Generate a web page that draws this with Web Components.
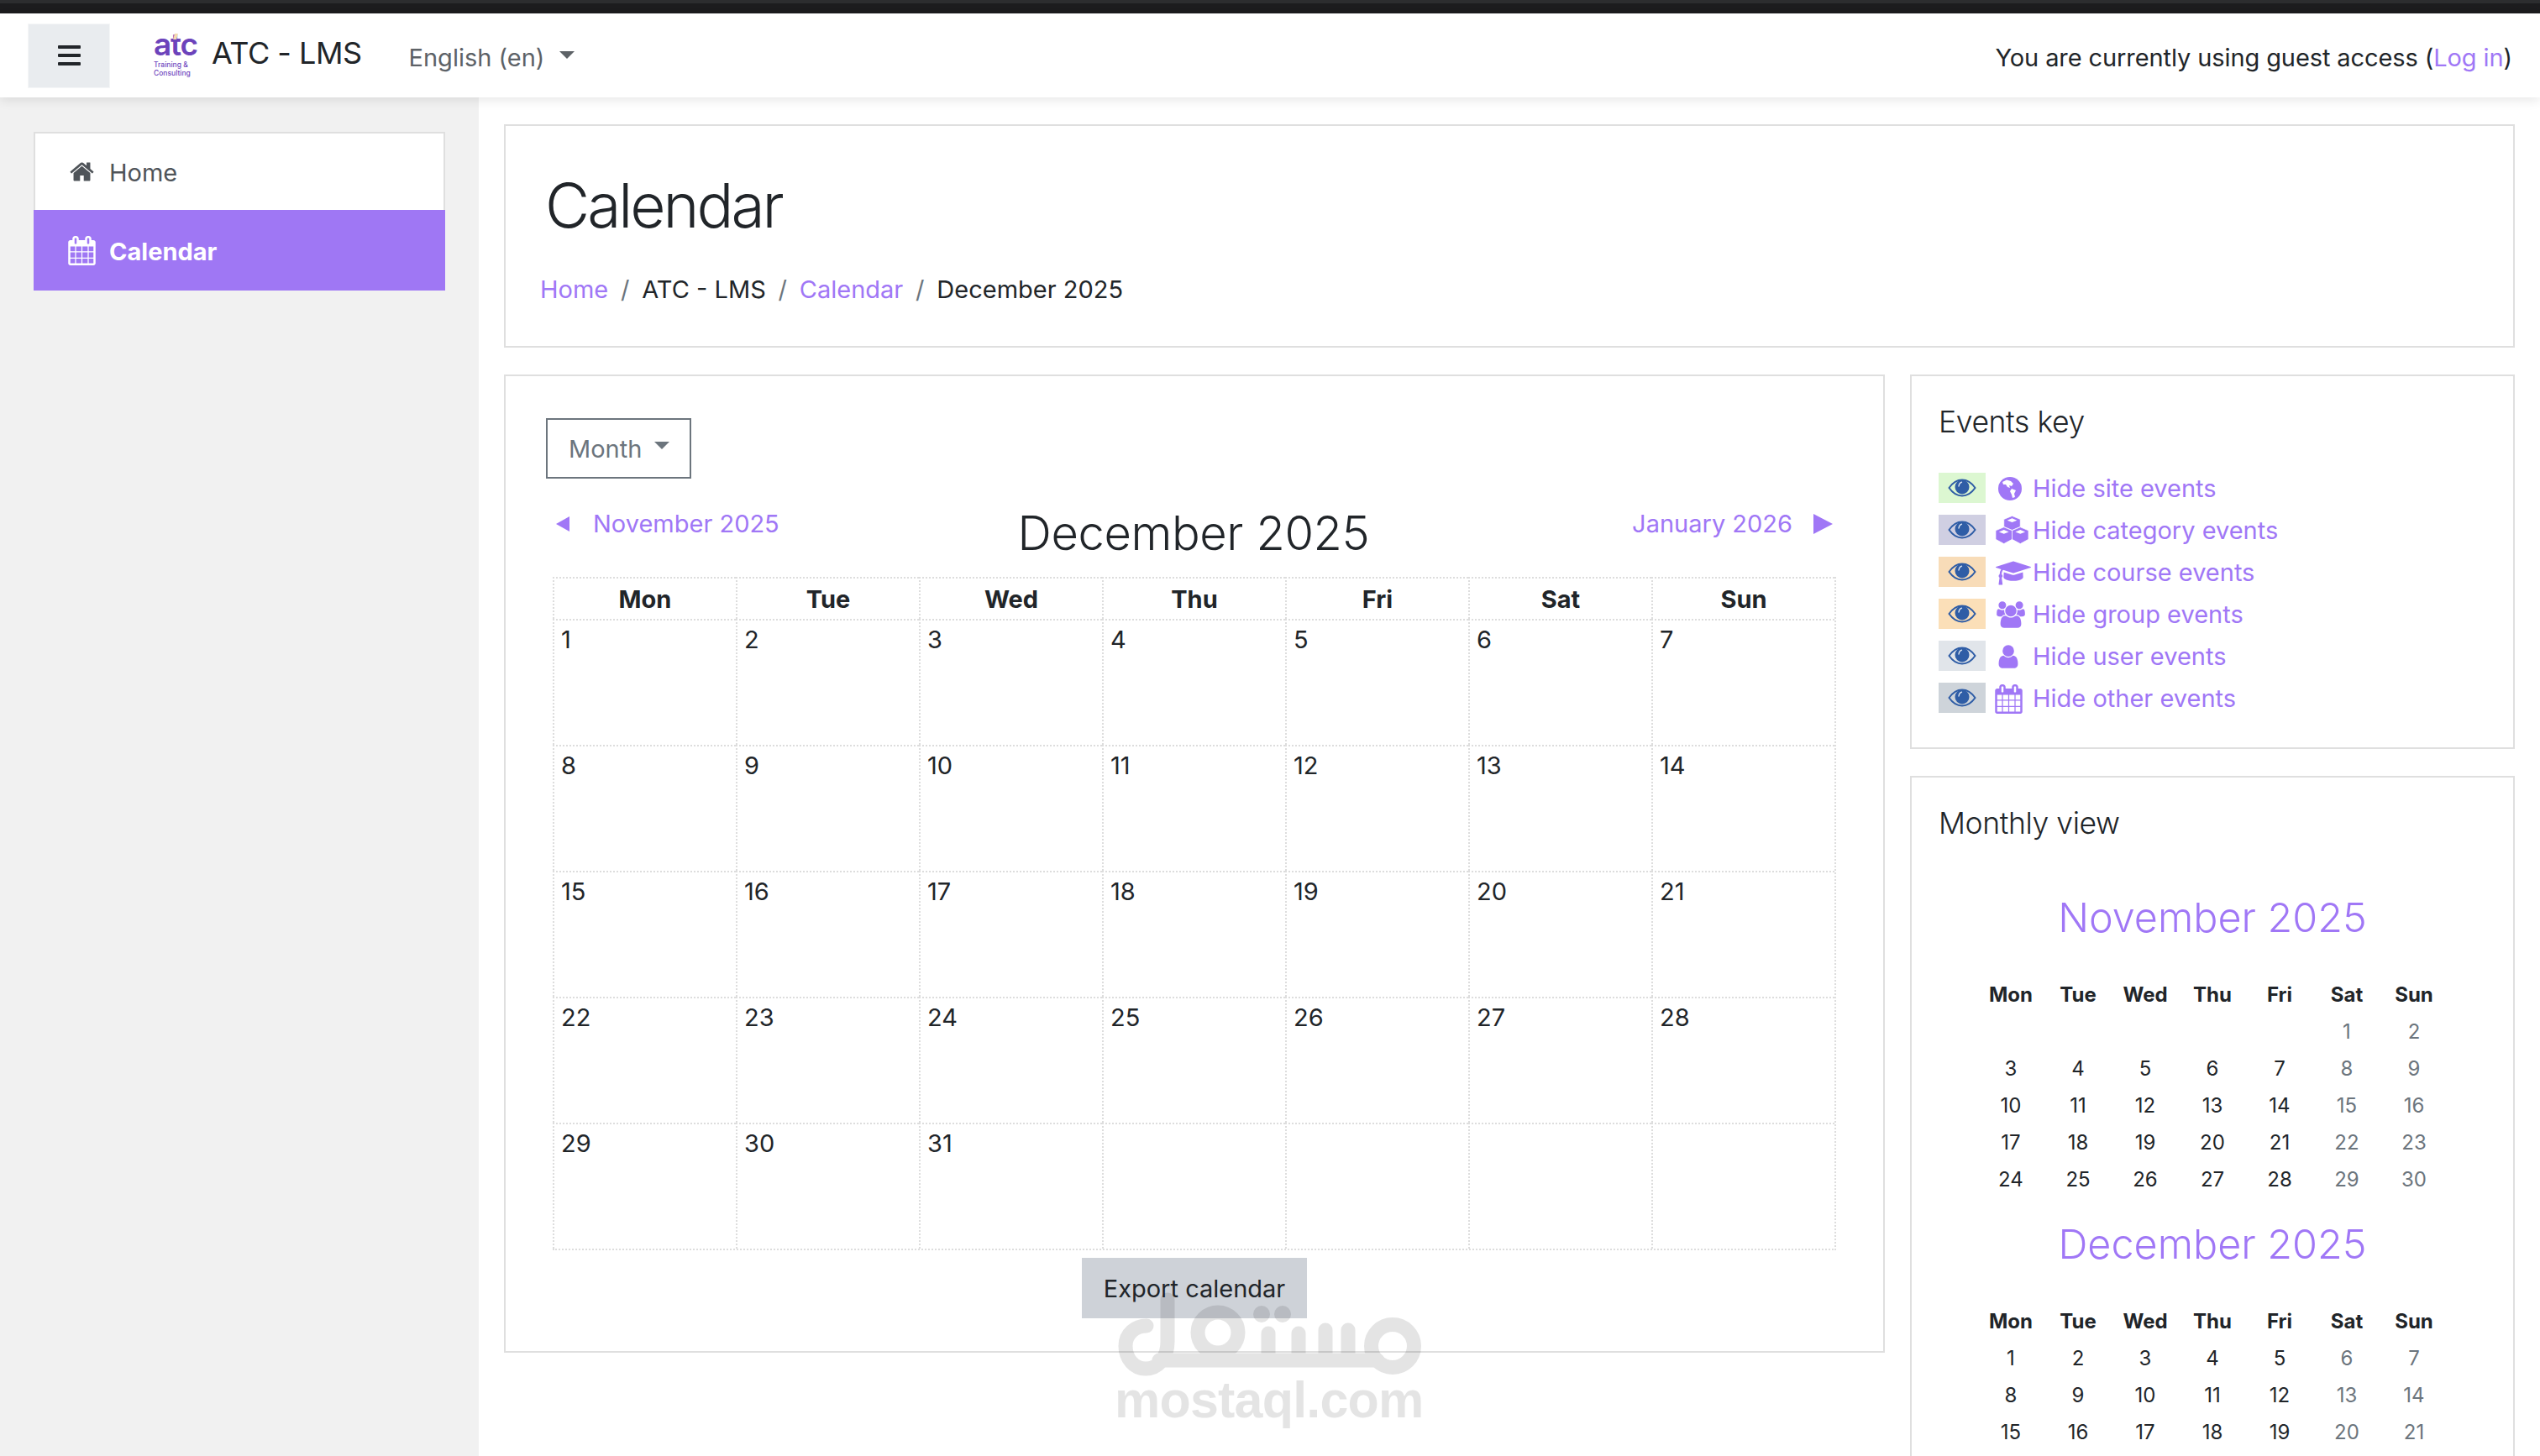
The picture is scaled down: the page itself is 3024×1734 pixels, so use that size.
<!DOCTYPE html>
<html lang="en"><head><meta charset="utf-8"><title>Calendar</title>
<style>
html,body{margin:0;padding:0;background:#fff}
body{font-family:Inter,"Noto Sans","Liberation Sans",sans-serif;font-size:29px;color:#212529;height:1734px;overflow:hidden}
</style></head><body>
<atc-app>
  <atc-topbar slot="top"></atc-topbar>
  <atc-sidebar slot="side">
    <atc-navitem icon="home">Home</atc-navitem>
    <atc-navitem icon="calendar" active>Calendar</atc-navitem>
  </atc-sidebar>
  <atc-pageheader slot="head"></atc-pageheader>
  <atc-card slot="left" pad="main"><atc-monthview></atc-monthview></atc-card>
  <atc-card slot="right" pad="block"><atc-eventskey></atc-eventskey></atc-card>
  <atc-card slot="right" pad="block" style="min-height:830px">
    <atc-blocktitle>Monthly view</atc-blocktitle>
    <atc-mini title="November 2025" offset="5" days="30" style="margin-top:61px"></atc-mini>
    <atc-mini title="December 2025" offset="0" days="21"></atc-mini>
  </atc-card>
  <atc-watermark slot="over"></atc-watermark>
</atc-app>
<script>
const P={
home:['0 0 1792 1792','M1472 992v480q0 26-19 45t-45 19h-384v-384h-256v384h-384q-26 0-45-19t-19-45v-480q0-1 .5-3t.5-3l575-474 575 474q1 2 1 6zm223-69l-62 74q-8 9-21 11h-3q-13 0-21-7l-692-577-692 577q-12 8-24 7-13-2-21-11l-62-74q-8-10-7-23.500t11-21.500l719-599q32-26 76-26t76 26l244 204v-195q0-14 9-23t23-9h192q14 0 23 9t9 23v408l219 182q10 8 11 21.500t-7 23.500z'],
calendar:['0 0 1792 1792','M192 1664h288v-288h-288v288zm352 0h320v-288h-320v288zm-352-352h288v-320h-288v320zm352 0h320v-320h-320v320zm-352-384h288v-288h-288v288zm736 736h320v-288h-320v288zm-384-736h320v-288h-320v288zm768 736h288v-288h-288v288zm-384-352h320v-320h-320v320zm-352-864v-288q0-13-9.500-22.500t-22.500-9.500h-64q-13 0-22.500 9.500t-9.500 22.500v288q0 13 9.500 22.500t22.500 9.500h64q13 0 22.500-9.500t9.500-22.500zm736 864h288v-320h-288v320zm-384-384h320v-288h-320v288zm384 0h288v-288h-288v288zm32-480v-288q0-13-9.500-22.500t-22.500-9.500h-64q-13 0-22.500 9.500t-9.500 22.500v288q0 13 9.500 22.500t22.500 9.500h64q13 0 22.500-9.500t9.500-22.500zm384-64v1280q0 52-38 90t-90 38h-1408q-52 0-90-38t-38-90v-1280q0-52 38-90t90-38h128v-96q0-66 47-113t113-47h64q66 0 113 47t47 113v96h384v-96q0-66 47-113t113-47h64q66 0 113 47t47 113v96h128q52 0 90 38t38 90z'],
cap:['0 0 2304 1792','M1774 836l18 316q4 69-82 128t-235 93.500-323 34.500-323-34.500-235-93.500-82-128l18-316 574 181q22 7 48 7t48-7zm530-324q0 23-22 31l-1120 352q-4 1-10 1t-10-1l-652-206q-43 34-71 111.500t-34 178.500q63 36 63 109 0 69-58 107l58 433q2 14-8 25-9 11-24 11h-192q-15 0-24-11-10-11-8-25l58-433q-58-38-58-107 0-73 65-111 11-207 98-330l-333-104q-22-8-22-31t22-31l1120-352q4-1 10-1t10 1l1120 352q22 8 22 31z'],
users:['0 0 2048 1792','M657 896q-162 5-265 128h-134q-82 0-138-40.500t-56-118.500q0-353 124-353 6 0 43.500 21t97.500 42.500 119 21.500q67 0 133-23-5 37-5 66 0 139 81 256zm1071 637q0 120-73 189.500t-194 69.500h-874q-121 0-194-69.500t-73-189.500q0-53 3.500-103.500t14-109 26.500-108.500 43-97.500 62-81 85.500-53.500 111.500-20q10 0 43 21.500t73 48 107 48 135 21.500 135-21.500 107-48 73-48 43-21.500q61 0 111.500 20t85.500 53.500 62 81 43 97.500 26.500 108.500 14 109 3.500 103.500zm-1024-1277q0 106-75 181t-181 75-181-75-75-181 75-181 181-75 181 75 75 181zm704 384q0 159-112.500 271.500t-271.500 112.500-271.500-112.500-112.500-271.500 112.500-271.500 271.500-112.500 271.500 112.500 112.500 271.500zm576 225q0 78-56 118.500t-138 40.500h-134q-103-123-265-128 81-117 81-256 0-29-5-66 66 23 133 23 59 0 119-21.500t97.500-42.500 43.500-21q124 0 124 353zm-128-609q0 106-75 181t-181 75-181-75-75-181 75-181 181-75 181 75 75 181z'],
user:['0 0 1792 1792','M1536 1399q0 109-62.500 187t-150.500 78h-854q-88 0-150.500-78t-62.500-187q0-85 8.500-160.500t31.500-152 58.500-131 94-89 134.500-34.500q131 128 313 128t313-128q76 0 134.500 34.500t94 89 58.500 131 31.500 152 8.500 160.500zm-256-887q0 159-112.500 271.500t-271.500 112.500-271.500-112.500-112.500-271.500 112.500-271.500 271.500-112.500 271.500 112.500 112.500 271.500z']
};
const svgIcon=(n,w,h)=>`<svg width="${w}" height="${h}" viewBox="${P[n][0]}" fill="currentColor" aria-hidden="true"><path d="${P[n][1]}"/></svg>`;
const globe=`<svg width="28" height="28" viewBox="0 0 28 28" aria-hidden="true" style="margin-left:3px"><circle cx="14" cy="14" r="14" fill="currentColor"/><path fill="#fff" d="M5 6l5-2.500 5 1.500 3 3-2 3-3-1 1 3-3-1-2-3-3 0zM16 14l5 2-2 4 1 4-3 1-1-4-2-4z"/></svg>`;
const cubes=`<svg width="41" height="34" viewBox="0 0 42 42" preserveAspectRatio="none" aria-hidden="true" style="margin-left:-1px;margin-top:-2px"><g fill="currentColor" stroke="#fff" stroke-width=".8" stroke-linejoin="round"><path d="M21 .5l10 5v11l-10 5-10-5V5.500z"/><path d="M11 17l10 5v13l-10 6.500-10-6.500V22z"/><path d="M31 17l10 5v13l-10 6.500-10-6.500V22z"/></g><g fill="#fff"><path d="M21 4l6 3-6 3-6-3zM11 21l6 3-6 3-6-3zM31 21l6 3-6 3-6-3z"/></g></svg>`;
const eye=`<svg width="34" height="22" viewBox="0 0 34 22" aria-hidden="true"><path d="M1.500 11C6 4.500 11 1.500 17 1.500S28 4.500 32.500 11C28 17.500 23 20.500 17 20.500S6 17.500 1.500 11z" fill="none" stroke="#2f5da6" stroke-width="2"/><circle cx="17" cy="10" r="8.500" fill="#2f5da6"/><path d="M13 9c.3-2.500 1.500-4 3.500-4.800" fill="none" stroke="#fff" stroke-width="1.300" stroke-linecap="round" opacity=".85"/></svg>`;
function def(name,html,setup){customElements.define(name,class extends HTMLElement{
  connectedCallback(){ if(this.shadowRoot) return; const s=this.attachShadow({mode:'open'}); s.innerHTML=typeof html==='function'?html(this):html; if(setup) setup(this,s);} });}

def('atc-app',`<style>
:host{display:block;position:relative;height:1734px;overflow:hidden}
.strip{height:16px;background:linear-gradient(#2c2d2f 0 4px,#1c1c1e 4px)}
.body{display:grid;grid-template-columns:570px 1fr;height:1618px}
.side{background:#f1f1f1;padding:41px 40px 0}
.main{padding:32px 30px 0 30px}
.cols{display:grid;grid-template-columns:1644px 720px;column-gap:30px;margin-top:32px;align-items:start}
.stack{display:flex;flex-direction:column;gap:32px}
</style>
<div class="strip"></div><slot name="top"></slot>
<div class="body"><div class="side"><slot name="side"></slot></div>
<div class="main"><slot name="head"></slot><div class="cols"><div><slot name="left"></slot></div><div class="stack"><slot name="right"></slot></div></div></div></div>
<slot name="over"></slot>`);

def('atc-topbar',`<style>
:host{display:flex;align-items:center;height:100px;background:#fff;box-shadow:0 4px 12px rgba(0,0,0,.09);position:relative;z-index:2;box-sizing:border-box;padding:0 33px 0 33px}
.tog{width:98px;height:77px;background:#e9ecef;border:1px solid #f5f6f7;box-sizing:border-box;display:flex;flex-direction:column;gap:5.500px;align-items:center;justify-content:center}
.tog i{display:block;width:27px;height:4.500px;background:#212529;border-radius:1px}
.logo{margin-left:52px;width:54px;line-height:1;color:#6c43bb;position:relative}
.logo b{display:block;font-size:37px;letter-spacing:-1.2px;font-weight:600;line-height:24px;margin-bottom:7px;position:relative}
.logo b::after{content:"";position:absolute;left:24px;top:-1px;width:4px;height:7px;background:#f5d9ae;transform:skewX(-14deg)}
.logo span{display:block;font-size:8.500px;font-weight:500;line-height:10px;color:#7048c0;white-space:nowrap}
.name{margin-left:15px;font-size:36px;margin-top:-6px;color:#212529;letter-spacing:-.5px;white-space:nowrap;font-weight:370}
.lang{margin-left:56px;color:#5d6267;font-size:29px;margin-top:4px;font-weight:370}
.car{margin-left:18px;width:0;height:0;border:9px solid transparent;border-top-color:#5d6267;border-bottom:0;margin-top:-1px}
.guest{margin-left:auto;font-size:29px;margin-top:4px;white-space:nowrap;color:#212529;font-weight:370;letter-spacing:-.1px}
a{color:#a077f6;text-decoration:none}
</style>
<div class="tog"><i></i><i></i><i></i></div>
<div class="logo"><b>atc</b><span>Training &amp;</span><span>Consulting</span></div>
<div class="name">ATC - LMS</div><div class="lang">English (en)</div><div class="car"></div>
<div class="guest">You are currently using guest access (<a>Log in</a>)</div>`);

def('atc-sidebar',`<style>:host{display:block}</style><slot></slot>`);
def('atc-navitem',el=>{const a=el.hasAttribute('active');return `<style>
:host{display:grid;grid-template-columns:50px auto;align-items:center;box-sizing:border-box;height:${a?96:93}px;
${a?'padding-left:40px;background:#9f77f4;color:#fff;font-weight:700;':'padding-left:38px;background:#fff;color:#4f5459;border:2px solid #dfdfdf;border-bottom:0;font-weight:370;'}}
svg{display:block;${a?'':'margin-left:2px;'}}.t{font-size:29px;margin-top:2px}
</style>${a?svgIcon('calendar',35,35):svgIcon('home',31,31)}<span class="t"><slot></slot></span>`});

def('atc-card',el=>{const p=el.getAttribute('pad');return `<style>
:host{display:block;background:#fff;border:2px solid #dfdfdf;box-sizing:border-box;${p==='main'?'height:1165px;padding:50px 48px 0 57px;':'padding:34px 32px 0 32px;'}}
</style><slot></slot>`});

def('atc-pageheader',`<style>
:host{display:block;height:266px;box-sizing:border-box;border:2px solid #dfdfdf;background:#fff;padding:50px 40px 0 41px}
h1{margin:0 0 0 6px;font-size:73px;font-weight:340;line-height:90px;color:#212529;letter-spacing:-3px}
nav{display:flex;gap:14.800px;margin-top:35px;font-size:29px;line-height:40px;font-weight:370}
a{color:#a077f6}.s{color:#6c757d}
</style><h1>Calendar</h1>
<nav><a>Home</a><span class="s">/</span><span>ATC - LMS</span><span class="s">/</span><a>Calendar</a><span class="s">/</span><span>December 2025</span></nav>`);

def('atc-monthview',`<style>
:host{display:block;font-weight:370}
.btn{margin-left:-9px;box-sizing:border-box;width:173px;height:72px;border:2px solid #6c757d;color:#6c757d;display:flex;align-items:center;padding-left:25px;gap:15px;font-size:29px}
.btn i{width:0;height:0;border:9px solid transparent;border-top-color:#6c757d;border-bottom:0;margin-top:-8px}
.nav{display:grid;grid-template-columns:1fr auto 1fr;width:1524px;height:117px;align-items:start;box-sizing:border-box}
.l,.r{display:flex;align-items:center;color:#a077f6;margin-top:36px;line-height:36px}
.l{gap:28px;padding-left:3px}.r{justify-content:flex-end;gap:25px;padding-right:1px}
.h{font-size:56px;font-weight:340;line-height:70px;margin-top:30px;color:#212529;letter-spacing:-.4px}
.tl{width:0;height:0;border:9px solid transparent;border-right:16px solid #a077f6;border-left:0}
.tr{width:0;height:0;border:12px solid transparent;border-left:23px solid #a077f6;border-right:0}
.g{display:grid;grid-template-columns:repeat(7,218px);grid-template-rows:50px repeat(5,150px);border-right:2px dotted #ddd;border-bottom:2px dotted #ddd;width:1526px;margin-left:-1px}
.g div{border-left:2px dotted #ddd;border-top:2px dotted #ddd}
.th{font-weight:700;text-align:center;line-height:50px}
.d{padding:5px 0 0 8px;line-height:36px}
.ex{width:268px;height:72px;background:#ced2d8;margin:9px 0 0 629px;display:flex;align-items:center;justify-content:center;font-size:29px;font-weight:400}
</style>
<div class="btn">Month<i></i></div>
<div class="nav"><div class="l"><span class="tl"></span>November 2025</div><div class="h">December 2025</div><div class="r">January 2026<span class="tr"></span></div></div>
<div class="g" id="g"></div>
<div class="ex">Export calendar</div>`,(el,s)=>{
  const g=s.getElementById('g');let h='';
  for(const d of ['Mon','Tue','Wed','Thu','Fri','Sat','Sun'])h+=`<div class="th">${d}</div>`;
  for(let i=1;i<=35;i++)h+=`<div class="d">${i<=31?i:''}</div>`;
  g.innerHTML=h;});

def('atc-blocktitle',`<style>:host{display:block;font-size:35.500px;line-height:42px;color:#212529;letter-spacing:-.4px;font-weight:340}</style><slot></slot>`);

def('atc-eventskey',`<style>
:host{display:block;padding-bottom:42px}
.list{margin-top:38px;display:grid;row-gap:14px}
</style><atc-blocktitle>Events key</atc-blocktitle><div class="list" id="l"></div>`,(el,s)=>{
  const rows=[['#dcf7d1',globe,'site'],['#d0cfe2',cubes,'category'],['#f8dcb8',svgIcon('cap',42,33),'course'],['#fbdfb8',svgIcon('users',36,32),'group'],['#e1e5ea',svgIcon('user',32,32).replace('<svg','<svg style="margin-left:-1px"'),'user'],['#ced4da',svgIcon('calendar',35,35).replace('<svg','<svg style="margin-left:-2px"'),'other']];
  s.getElementById('l').innerHTML=rows.map(r=>`<atc-keyrow><span slot="eye" style="background:${r[0]}">${eye}</span><span slot="ico">${r[1]}</span>Hide ${r[2]} events</atc-keyrow>`).join('');});
def('atc-keyrow',`<style>
:host{display:grid;grid-template-columns:56px 56px auto;height:36px;align-items:center;color:#a077f6;font-size:29px;justify-content:start;font-weight:370}
::slotted([slot=eye]){width:56px;height:36px;display:flex;align-items:center;justify-content:center}
::slotted([slot=ico]){display:flex;align-items:center;justify-content:flex-start;margin-left:12px;height:36px;position:relative;top:1px}
.t{line-height:36px;margin-top:2px;white-space:nowrap}
</style><slot name="eye"></slot><slot name="ico"></slot><span class="t"><slot></slot></span>`);

def('atc-mini',el=>{const o=+el.getAttribute('offset'),n=+el.getAttribute('days');let h='';
  for(const d of ['Mon','Tue','Wed','Thu','Fri','Sat','Sun'])h+=`<div class="th">${d}</div>`;
  for(let i=0;i<o;i++)h+='<div></div>';
  for(let d=1;d<=n;d++){const w=(o+d-1)%7>=5;h+=`<div class="${w?'w':''}">${d}</div>`;}
  return `<style>
:host{display:block;margin-bottom:25px}
.t{font-size:48.500px;font-weight:340;line-height:60px;text-align:center;color:#a077f6;margin-bottom:40px}
.g{display:grid;grid-template-columns:repeat(7,80px);grid-auto-rows:44px;width:560px;margin:0 auto;font-size:24px;font-weight:370;text-align:center;line-height:44px;color:#212529}
.th{font-weight:700}.w{color:#6c757d}
</style><div class="t">${el.getAttribute('title')}</div><div class="g">${h}</div>`});

def('atc-watermark',`<style>
:host{position:absolute;left:1330px;top:1538px;width:364px;height:165px;opacity:.1;color:#000;pointer-events:none;z-index:5}
svg{position:absolute;left:0;top:0}
.t{position:absolute;left:-3px;top:89px;font:700 61px/80px "Liberation Sans",sans-serif;white-space:nowrap;letter-spacing:-.8px}
</style>
<svg width="364" height="105" viewBox="0 0 364 105"><g fill="none" stroke="#000" stroke-width="17" stroke-linecap="round" stroke-linejoin="round">
<circle cx="328" cy="65" r="25.500"/><circle cx="120" cy="49" r="24"/>
<path d="M60 10V60C60 80 48 92 34 92C20 92 10 80 10 65C10 50 22 41 35 41"/>
<path d="M50 82C70 82 300 82 310 82"/>
<path d="M180 75V50M216 75V50M248 75V46M275 75V46"/></g>
<circle cx="172" cy="27" r="10"/><circle cx="197" cy="27" r="10"/></svg>
<div class="t">mostaql.com</div>`);
</script>
</body></html>
